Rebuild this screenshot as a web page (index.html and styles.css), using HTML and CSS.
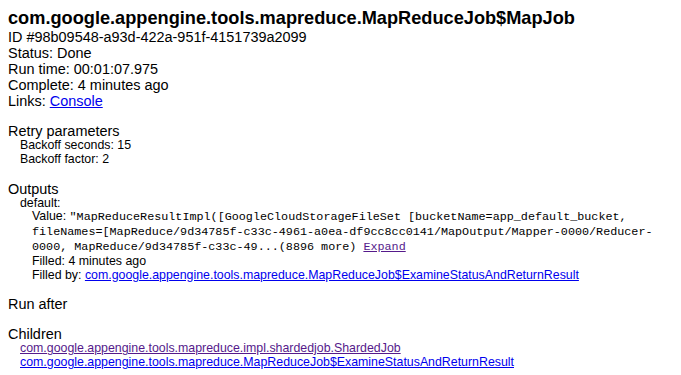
FILE: index.html
```html
<!DOCTYPE html>
<html lang="en">
<head>
  <meta charset="UTF-8" />
  <title>Pipeline status</title>
  <link rel="stylesheet" href="styles.css">
</head>
<body>
  <div class="status-panel">
    <h1 class="job-title">com.google.appengine.tools.mapreduce.MapReduceJob$MapJob</h1>
    <div class="info-line">ID #98b09548-a93d-422a-951f-4151739a2099</div>
    <div class="info-line">Status: Done</div>
    <div class="info-line">Run time: 00:01:07.975</div>
    <div class="info-line">Complete: 4 minutes ago</div>
    <div class="info-line">Links: <a href="#console">Console</a></div>

    <div class="section">
      <div class="section-title">Retry parameters</div>
      <div class="sub">
        <div>Backoff seconds: 15</div>
        <div>Backoff factor: 2</div>
      </div>
    </div>

    <div class="section">
      <div class="section-title">Outputs</div>
      <div class="sub">
        <div>default:</div>
        <div class="sub">
          <div>Value: <span class="mono">"MapReduceResultImpl([GoogleCloudStorageFileSet [bucketName=app_default_bucket, fileNames=[MapReduce/9d34785f-c33c-4961-a0ea-df9cc8cc0141/MapOutput/Mapper-0000/Reducer-0000, MapReduce/9d34785f-c33c-49...(8896 more) <a class="visited" href="#expand">Expand</a></span></div>
          <div>Filled: 4 minutes ago</div>
          <div>Filled by: <a href="#examine">com.google.appengine.tools.mapreduce.MapReduceJob$ExamineStatusAndReturnResult</a></div>
        </div>
      </div>
    </div>

    <div class="section">
      <div class="section-title">Run after</div>
    </div>

    <div class="section">
      <div class="section-title">Children</div>
      <div class="sub">
        <div><a class="visited" href="#sharded">com.google.appengine.tools.mapreduce.impl.shardedjob.ShardedJob</a></div>
        <div><a href="#examine">com.google.appengine.tools.mapreduce.MapReduceJob$ExamineStatusAndReturnResult</a></div>
      </div>
    </div>
  </div>
</body>
</html>
```

FILE: styles.css
```css
body {
  margin: 8px;
  font-family: "Liberation Sans", Arial, sans-serif;
  font-size: 14.45px;
  line-height: 16px;
  color: #000;
  background: #fff;
}

a {
  color: #0000ee;
  text-decoration: underline;
}

a.visited {
  color: #551a8b;
}

.job-title {
  margin: 0;
  font-size: 18.2px;
  line-height: 21px;
  font-weight: bold;
}

.section {
  margin-top: 14px;
}

.sub {
  padding-left: 12px;
  font-size: 12.37px;
  line-height: 13.8px;
}

.mono {
  font-family: "Liberation Mono", "Courier New", monospace;
  font-size: 11.75px;
}
```
